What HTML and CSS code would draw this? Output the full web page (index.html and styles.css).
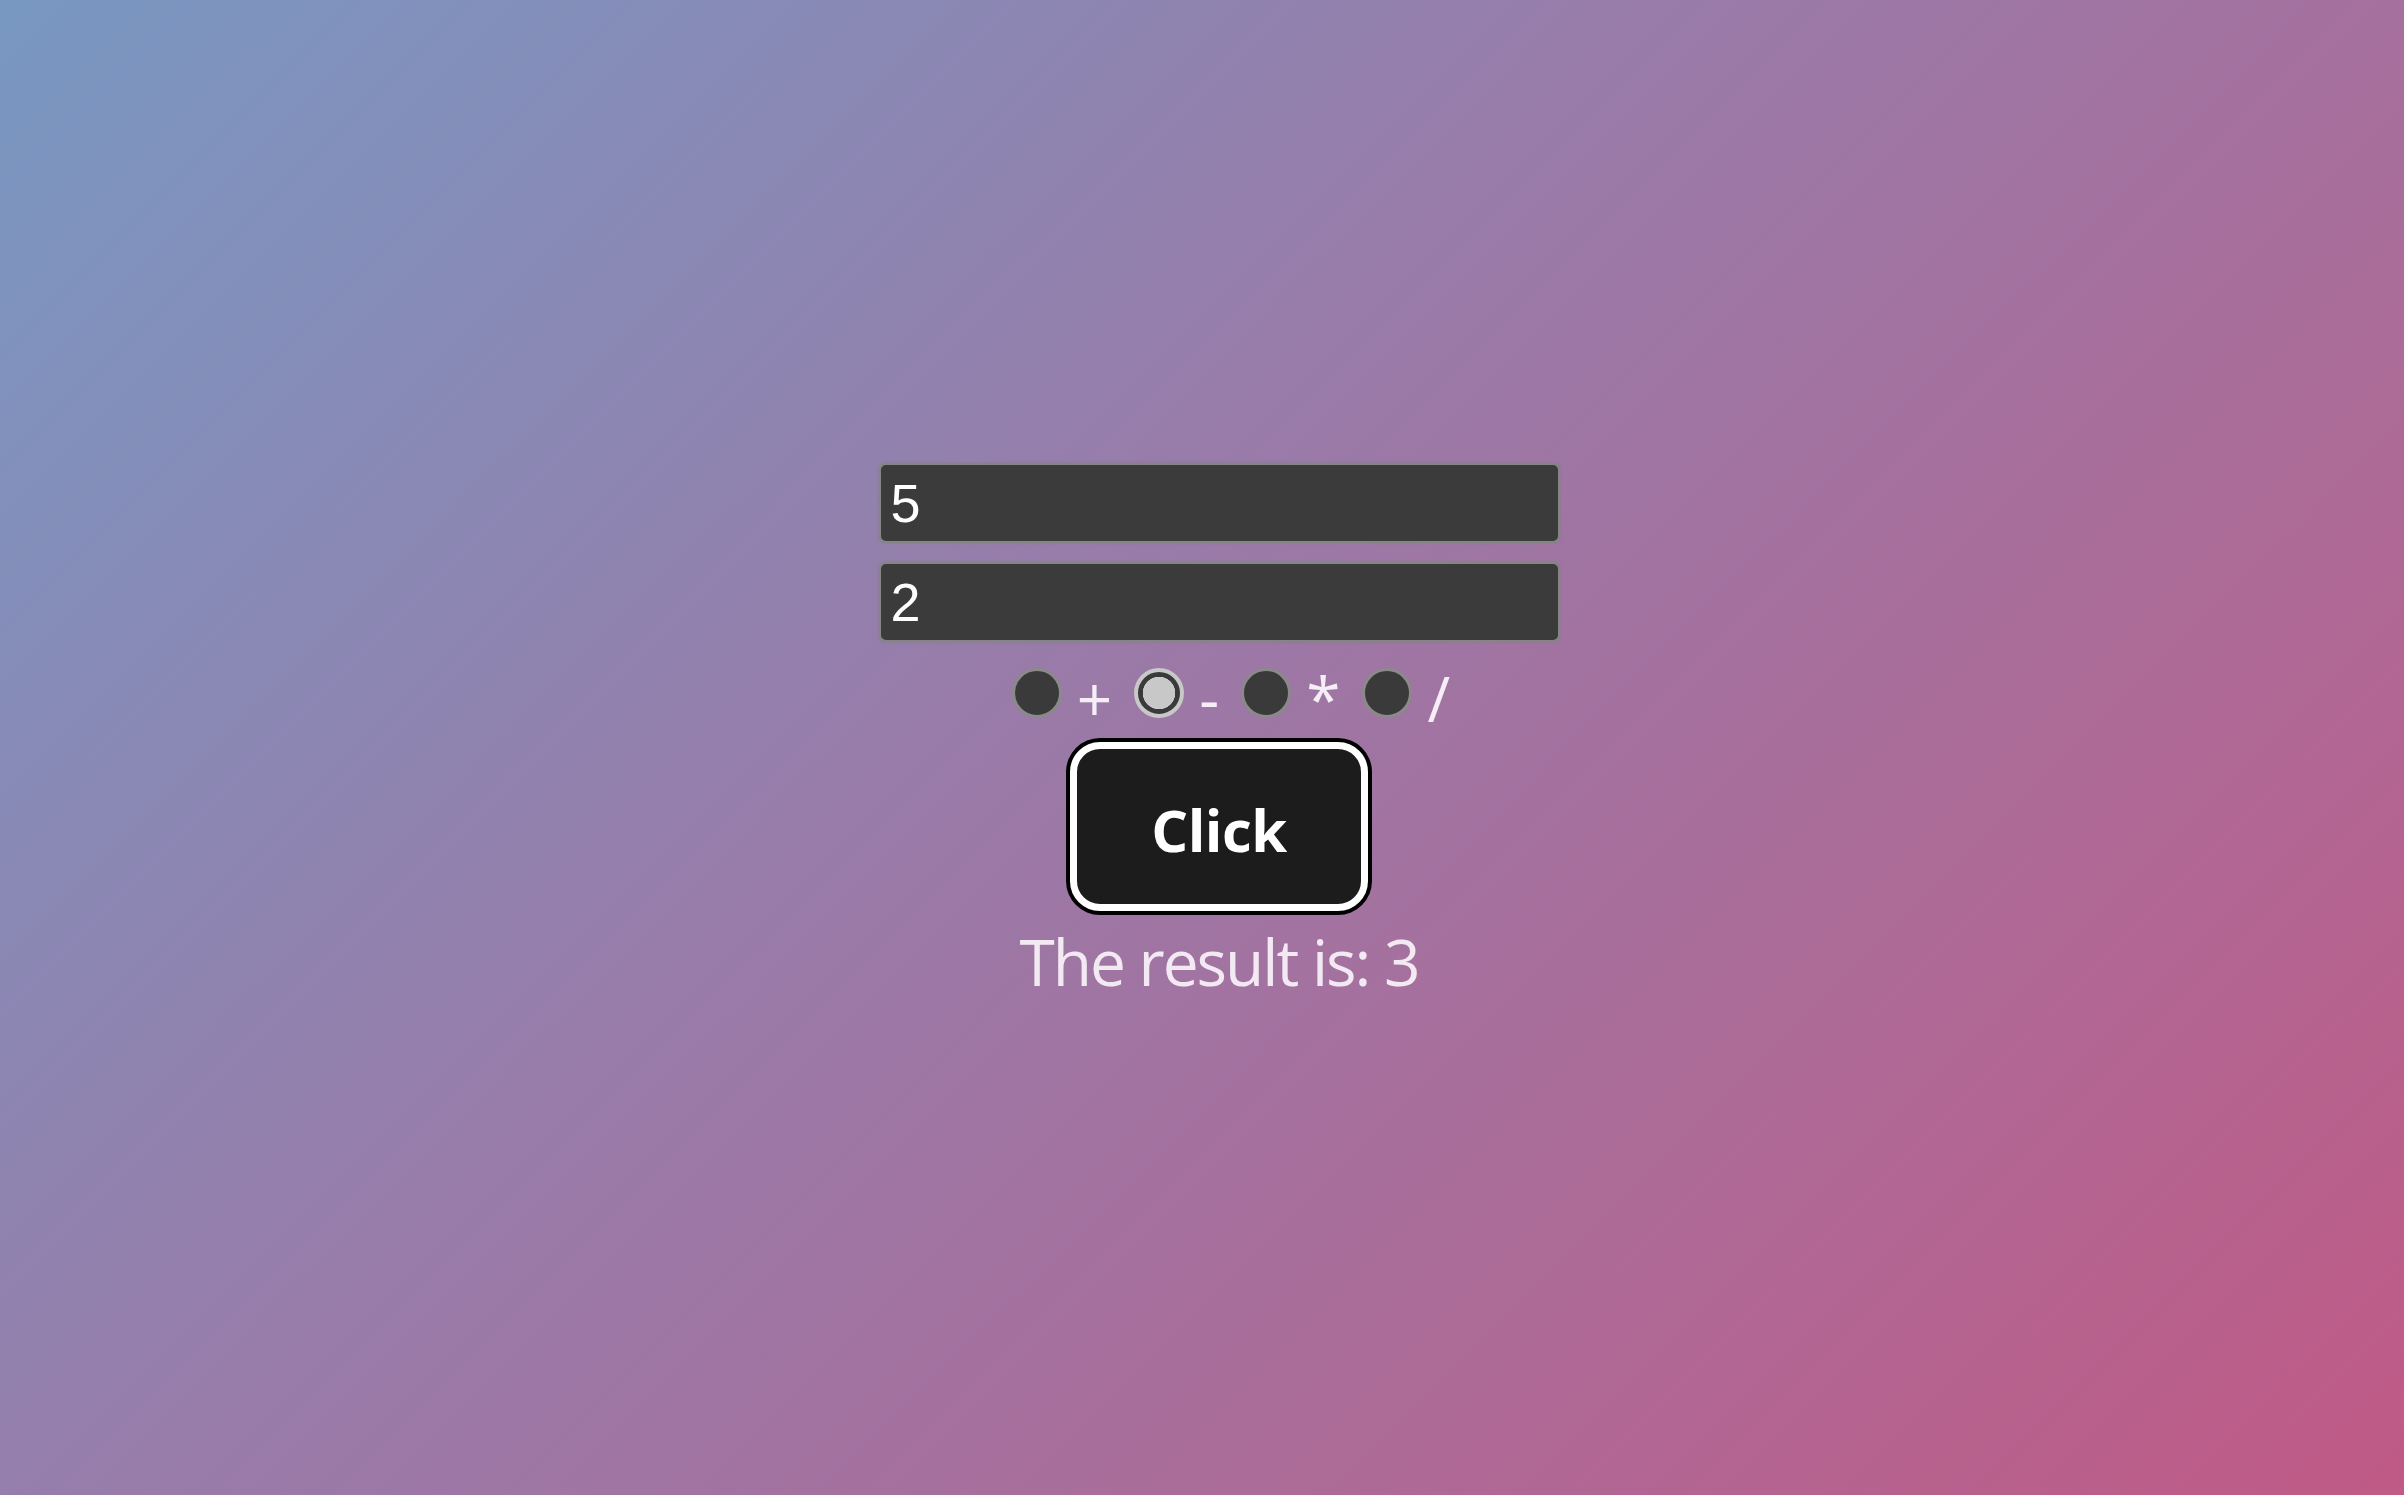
FILE: index.html
```html
<!DOCTYPE html>
<html lang="en">
<head>
<meta charset="utf-8">
<title>Calculator</title>
<link rel="stylesheet" href="styles.css">
</head>
<body>
<main class="calc">
  <input class="num" type="text" value="5">
  <input class="num" type="text" value="2">
  <div class="ops">
    <input class="radio" type="radio" name="op" id="op-add">
    <label class="op-label" for="op-add">+</label>
    <input class="radio" type="radio" name="op" id="op-sub" checked>
    <label class="op-label" for="op-sub">-</label>
    <input class="radio" type="radio" name="op" id="op-mul">
    <label class="op-label" for="op-mul">*</label>
    <input class="radio" type="radio" name="op" id="op-div">
    <label class="op-label" for="op-div">/</label>
  </div>
  <button class="btn" type="button">Click</button>
  <p class="result">The result is: 3</p>
</main>
</body>
</html>
```

FILE: styles.css
```css
html, body {
  margin: 0;
  height: 100%;
}

body {
  background: linear-gradient(135deg, #7898c2 0%, #9a7aa8 45%, #c05a86 100%);
  font-family: "Open Sans", "Noto Sans", sans-serif;
}

.calc {
  display: flex;
  flex-direction: column;
  align-items: center;
  padding: 463px 0 0 34px;
}

.num {
  box-sizing: border-box;
  width: 681px;
  height: 80px;
  margin: 0 0 19px 0;
  padding: 0 10px;
  background: #3b3b3b;
  border: 2px solid #858585;
  border-radius: 7px;
  box-shadow: 0 0 3px rgba(128, 128, 128, 0.9);
  color: #ffffff;
  font-family: "Liberation Sans", Arial, sans-serif;
  font-size: 54px;
  outline: none;
}

.ops {
  display: flex;
  align-items: center;
  height: 52px;
  margin-top: 6px;
  padding-left: 24px;
}

.radio {
  appearance: none;
  -webkit-appearance: none;
  box-sizing: border-box;
  width: 50px;
  height: 50px;
  margin: 0;
  border-radius: 50%;
  background: #3a3a3a;
  border: 3px solid #8a8a8a;
}

.radio:checked {
  border: 4px solid #c8c8c8;
  background: radial-gradient(circle, #c8c8c8 0 16px, #3a3a3a 16.5px);
}

.op-label {
  color: #f6eef6;
  font-size: 62px;
  line-height: 52px;
  padding-top: 10px;
  margin: 0 22px 0 15px;
}

.op-label:last-child {
  margin-right: 0;
}

.btn {
  box-sizing: border-box;
  width: 298px;
  height: 169px;
  margin-top: 23px;
  border: 7px solid #ffffff;
  border-radius: 30px;
  box-shadow: 0 0 0 4px #000000;
  background: #1c1c1c;
  color: #ffffff;
  font-family: "Open Sans", "Noto Sans", sans-serif;
  font-weight: 700;
  font-size: 58px;
  letter-spacing: -0.5px;
  padding-top: 6px;
  cursor: pointer;
}

.result {
  margin: 13px 0 0 0;
  color: #f3e9f3;
  font-size: 64px;
  letter-spacing: -2px;
  line-height: 1.2;
}
```
